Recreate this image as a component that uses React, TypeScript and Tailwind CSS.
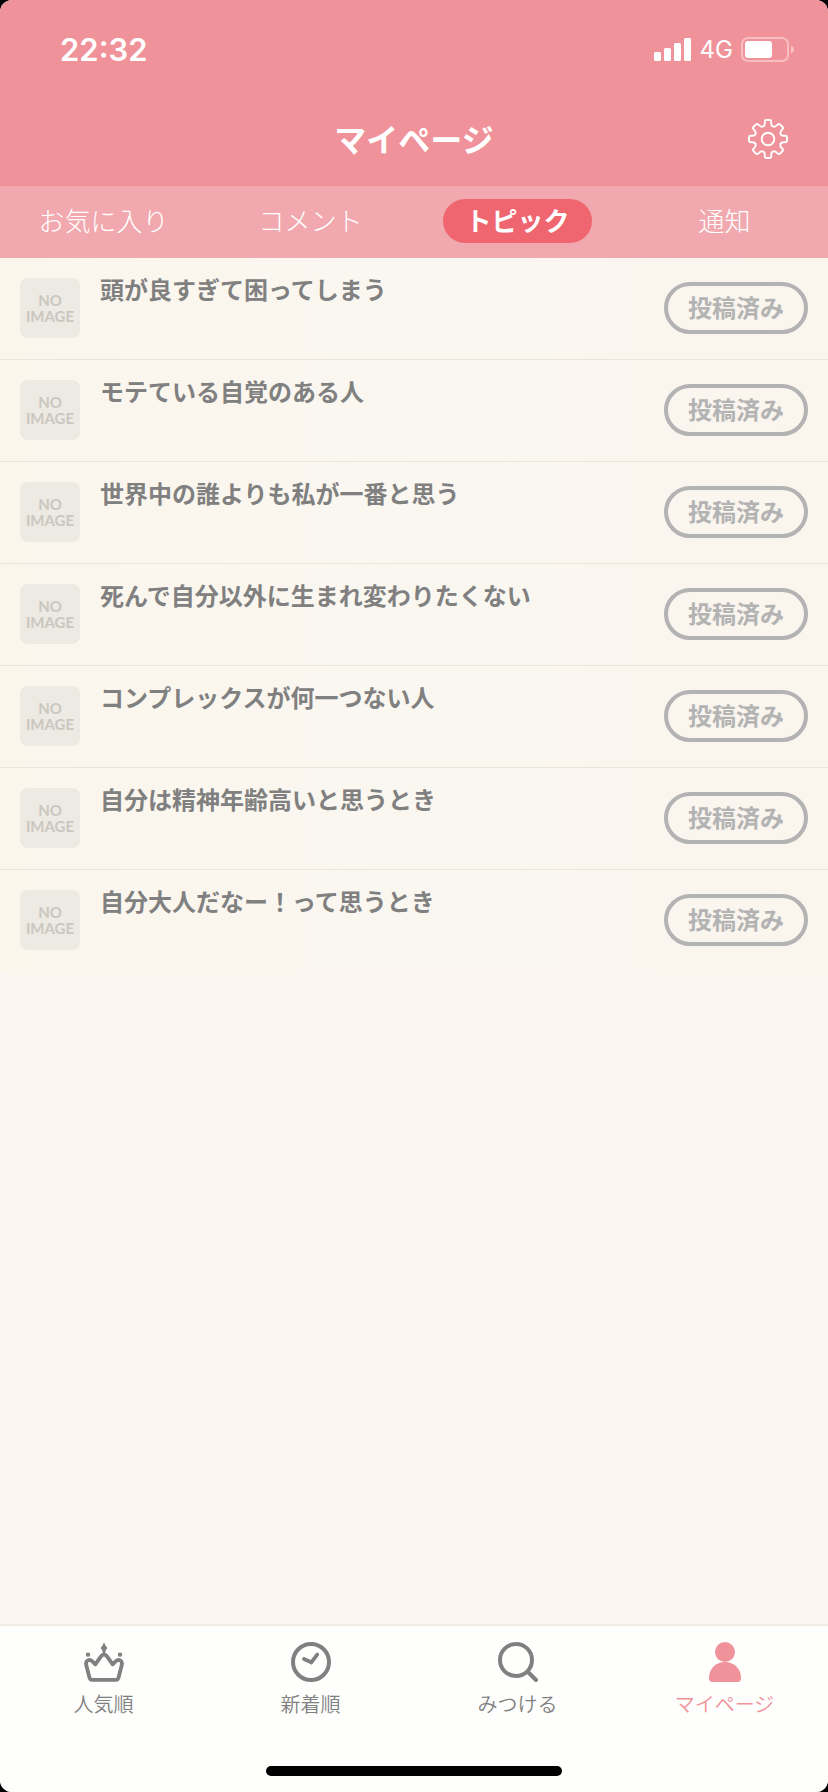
import React from "react";

const tabs = ["お気に入り", "コメント", "トピック", "通知"];

const topics = [
  "頭が良すぎて困ってしまう",
  "モテている自覚のある人",
  "世界中の誰よりも私が一番と思う",
  "死んで自分以外に生まれ変わりたくない",
  "コンプレックスが何一つない人",
  "自分は精神年齢高いと思うとき",
  "自分大人だなー！って思うとき",
];

function StatusBar() {
  return (
    <div className="flex h-25 items-center justify-between pr-[34px] pl-15 font-[Inter,sans-serif] text-white">
      <time className="text-[31px] leading-10 font-semibold">22:32</time>
      <div className="flex items-center gap-2">
        <svg width="38" height="24" viewBox="0 0 38 24" fill="currentColor" aria-hidden="true">
          <rect x="0" y="14" width="7" height="9" rx="1.5" />
          <rect x="10" y="10" width="7" height="13" rx="1.5" />
          <rect x="20" y="5" width="7" height="18" rx="1.5" />
          <rect x="30" y="0" width="7" height="23" rx="1.5" />
        </svg>
        <span className="text-[24px] leading-8">4G</span>
        <svg width="53" height="26" viewBox="0 0 53 26" fill="none" aria-hidden="true">
          <rect x="1" y="1" width="46" height="23" rx="6" stroke="white" strokeOpacity="0.4" strokeWidth="2" />
          <rect x="4" y="4" width="27" height="17" rx="3" fill="white" />
          <path d="M50 8.5c4 1.5 4 6.5 0 8z" fill="white" fillOpacity="0.45" />
        </svg>
      </div>
    </div>
  );
}

const gearQuarter =
  "M20 1H21.8Q23.2 1 23.2 2.4V4.5C23.4 8.3 26.8 8.6 29 6.2Q30.8 4.3 32 5.4L34.6 8Q35.7 9.2 33.8 11C31.4 13.2 31.7 16.6 35.5 16.8H37.6Q39 16.8 39 18.2V20";

function GearIcon() {
  return (
    <svg width="40" height="40" viewBox="0 0 40 40" fill="none" stroke="currentColor" strokeWidth="1.9" aria-hidden="true">
      <path d={gearQuarter} />
      <path d={gearQuarter} transform="rotate(90 20 20)" />
      <path d={gearQuarter} transform="rotate(180 20 20)" />
      <path d={gearQuarter} transform="rotate(270 20 20)" />
      <circle cx="20" cy="20" r="6.3" />
    </svg>
  );
}

function CrownIcon() {
  return (
    <svg width="40" height="40" viewBox="0 0 120 120" aria-hidden="true">
      <path
        d="M24 113.5H96Q102 113.5 103.5 107L113.5 68C116 56 104 50 96 57L86 67L69 43Q60 33 51 43L34 67L24 57C16 50 4 56 6.5 68L16.5 107Q18 113.5 24 113.5Z"
        fill="none"
        stroke="currentColor"
        strokeWidth="11.5"
        strokeLinejoin="round"
      />
      <path d="M60 1Q63 10 70 18Q63 25 63 34H57Q57 25 50 18Q57 10 60 1Z" fill="currentColor" />
      <circle cx="12" cy="38" r="6.5" fill="currentColor" />
      <circle cx="108" cy="38" r="6.5" fill="currentColor" />
    </svg>
  );
}

function ClockIcon() {
  return (
    <svg width="40" height="40" viewBox="0 0 40 40" fill="none" stroke="currentColor" strokeWidth="4" strokeLinecap="round" aria-hidden="true">
      <circle cx="20" cy="20" r="18" />
      <path d="M13 17L20.3 20.3L26.2 12.6" strokeWidth="3.8" strokeLinejoin="miter" />
    </svg>
  );
}

function SearchIcon() {
  return (
    <svg width="40" height="40" viewBox="0 0 40 40" fill="none" stroke="currentColor" strokeWidth="4" strokeLinecap="round" aria-hidden="true">
      <circle cx="18" cy="18" r="16" />
      <path d="M30 30L38 38" />
    </svg>
  );
}

function PersonIcon() {
  return (
    <svg width="40" height="40" viewBox="0 0 40 40" fill="currentColor" aria-hidden="true">
      <circle cx="20" cy="10" r="10" />
      <path d="M4 36C4 26.5 11 20 20 20S36 26.5 36 36Q36 40 32.5 40H7.5Q4 40 4 36Z" />
    </svg>
  );
}

const navItems = [
  { label: "人気順", Icon: CrownIcon, active: false },
  { label: "新着順", Icon: ClockIcon, active: false },
  { label: "みつける", Icon: SearchIcon, active: false },
  { label: "マイページ", Icon: PersonIcon, active: true },
];

export default function App() {
  return (
    <div className="min-h-screen bg-black font-['Noto_Sans_CJK_JP',sans-serif]">
      <div className="flex min-h-screen flex-col overflow-hidden rounded-xl bg-[#faf5ee]">
        <header className="bg-[#f0929a] text-white">
          <StatusBar />
          <div className="grid grid-cols-[1fr_auto_1fr] items-center px-10 pb-2">
            <h1 className="col-start-2 pb-[2px] text-[32px] leading-[76px] font-bold">マイページ</h1>
            <button type="button" aria-label="設定" className="justify-self-end">
              <GearIcon />
            </button>
          </div>
        </header>

        <nav
          aria-label="マイページの項目"
          className="grid h-18 grid-cols-4 items-start bg-[#f1a8ae] pt-[13px] text-[26px] leading-[42px] text-white"
        >
          {tabs.map((tab) => (
            <button
              key={tab}
              type="button"
              className={
                tab === "トピック"
                  ? "h-11 justify-self-center rounded-full bg-[#ef6670] px-[22px] pb-[2px] font-bold"
                  : "h-11 justify-self-center pb-[2px] font-light"
              }
            >
              {tab}
            </button>
          ))}
        </nav>

        <main className="flex-1">
          <ul className="divide-y divide-[#eae6de] bg-linear-to-r from-[#fbf6ec] via-[#faf7f1] to-[#faf5ed]">
            {topics.map((topic) => (
              <li key={topic} className="flex h-[102px] items-start gap-5 px-5 pt-5">
                <div className="flex size-15 shrink-0 flex-col items-center justify-center rounded-lg bg-[#ede9e3] font-[Lato,sans-serif] text-[15px] leading-4 font-bold text-[#cac7c0]">
                  <span>NO</span>
                  <span>IMAGE</span>
                </div>
                <h2 className="min-w-0 flex-1 text-2xl leading-[22px] font-bold text-[#808080]">{topic}</h2>
                <button
                  type="button"
                  className="mt-1 h-13 w-36 shrink-0 rounded-full border-4 border-[#b3b3b3] pb-[2px] text-2xl leading-[42px] font-bold text-[#b3b3b3]"
                >
                  投稿済み
                </button>
              </li>
            ))}
          </ul>
        </main>

        <footer className="border-t-2 border-[#f0ece5] bg-[#fefefd]">
          <nav aria-label="メインメニュー" className="grid grid-cols-4 pt-4">
            {navItems.map(({ label, Icon, active }) => (
              <a
                key={label}
                href="#"
                aria-current={active ? "page" : undefined}
                className={
                  active
                    ? "flex flex-col items-center gap-2 text-[#f0929a]"
                    : "flex flex-col items-center gap-2 text-[#808080]"
                }
              >
                <Icon />
                <span className="text-xl leading-7 font-[350]">{label}</span>
              </a>
            ))}
          </nav>
          <div className="mx-auto mt-12 mb-4 h-[10px] w-74 rounded-full bg-black" />
        </footer>
      </div>
    </div>
  );
}
